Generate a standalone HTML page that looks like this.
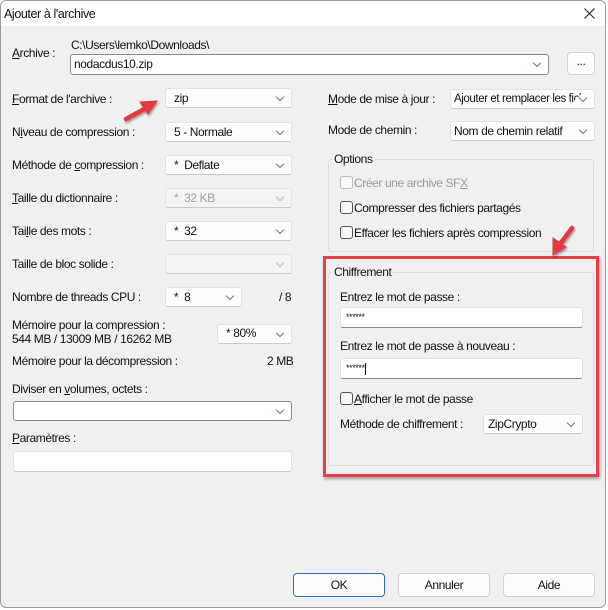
<!DOCTYPE html>
<html><head><meta charset="utf-8"><style>
*{box-sizing:border-box;margin:0;padding:0}
body{width:608px;height:610px;background:#fff;font-family:"Liberation Sans",sans-serif;font-size:12px;color:#111;position:relative;overflow:hidden;letter-spacing:-0.4px}
.win{position:absolute;left:0;top:0;width:606px;height:608px;border:1px solid #9a9a9a;border-radius:6px;background:#f0f0f0;overflow:hidden}
.title{position:absolute;left:0;top:0;width:606px;height:25px;background:#fff}
.a{position:absolute;white-space:nowrap;line-height:14px}
.cb{position:absolute;background:#fdfdfd;border:1px solid #e2e2e2;border-bottom-color:#c8c8c8;border-radius:3px;padding-left:8px;line-height:18px;white-space:nowrap;overflow:hidden}
.cb.dis{background:#f3f3f3;color:#a0a0a0}
.cb::after{content:"";position:absolute;right:8px;top:5px;width:5px;height:5px;border-right:1px solid #777;border-bottom:1px solid #777;transform:rotate(45deg);background:#fdfdfd;box-shadow:3px 3px 0 4px #fdfdfd}
.cb.dis::after{border-color:#bbb;background:#f3f3f3;box-shadow:none}
.ed{position:absolute;background:#fff;border:1px solid #e0e0e0;border-bottom:1px solid #888;border-radius:3px;padding-left:5px;line-height:18px}
.grp{position:absolute;border:1px solid #dcdcdc;border-radius:3px}
.lg{position:absolute;background:#f0f0f0;padding:0 2px;line-height:14px}
.ck{position:absolute;width:13px;height:13px;border:1px solid #555;border-radius:3px;background:#f8f8f8}
.btn{position:absolute;height:24px;background:#fdfdfd;border:1px solid #d0d0d0;border-radius:4px;text-align:center;line-height:22px}
u{text-decoration:underline}
</style></head><body>
<div class="win">
<div class="title"></div>
<div class="a" style="left:3px;top:6px;font-size:12.5px">Ajouter à l'archive</div>
<svg style="position:absolute;left:583px;top:7px" width="11" height="11"><path d="M0.5 0.5L10.5 10.5M10.5 0.5L0.5 10.5" stroke="#222" stroke-width="1.1"/></svg>

<div class="a" style="left:11px;top:45px"><u>A</u>rchive :</div>
<div class="a" style="left:70px;top:37px">C:\Users\lemko\Downloads\</div>
<div class="cb" style="left:69px;top:53px;width:479px;height:21px;border:1px solid #888;background:#fff;padding-left:3px">nodacdus10.zip</div>
<div class="btn" style="left:566px;top:51px;width:28px;height:23px;line-height:17px">...</div>

<div class="a" style="left:11px;top:91px"><u>F</u>ormat de l'archive :</div>
<div class="cb" style="left:164px;top:87px;width:127px;height:20px">zip</div>
<div class="a" style="left:11px;top:124px">N<u>i</u>veau de compression :</div>
<div class="cb" style="left:164px;top:121px;width:127px;height:20px">5 - Normale</div>
<div class="a" style="left:11px;top:157px">Méthode de <u>c</u>ompression :</div>
<div class="cb" style="left:164px;top:154px;width:127px;height:20px">* &nbsp;Deflate</div>
<div class="a" style="left:11px;top:190px"><u>T</u>aille du dictionnaire :</div>
<div class="cb dis" style="left:164px;top:187px;width:127px;height:20px">* &nbsp;32 KB</div>
<div class="a" style="left:11px;top:223px">Tai<u>l</u>le des mots :</div>
<div class="cb" style="left:164px;top:220px;width:127px;height:20px">* &nbsp;32</div>
<div class="a" style="left:11px;top:256px">Taille de bloc solide :</div>
<div class="cb dis" style="left:164px;top:253px;width:127px;height:20px"></div>
<div class="a" style="left:11px;top:289px">Nombre de threads CPU :</div>
<div class="cb" style="left:164px;top:286px;width:77px;height:20px">* &nbsp;8</div>
<div class="a" style="left:278px;top:289px">/ 8</div>
<div class="a" style="left:11px;top:317px">Mémoire pour la compression :</div>
<div class="a" style="left:11px;top:331px">544 MB / 13009 MB / 16262 MB</div>
<div class="cb" style="left:216px;top:323px;width:75px;height:20px;line-height:16px">* 80%</div>
<div class="a" style="left:11px;top:353px">Mémoire pour la décompression :</div>
<div class="a" style="left:266px;top:353px">2 MB</div>
<div class="a" style="left:11px;top:381px">Diviser en <u>v</u>olumes, octets :</div>
<div class="cb" style="left:12px;top:400px;width:279px;height:20px;border:1px solid #888;background:#fff"></div>
<div class="a" style="left:11px;top:430px"><u>P</u>aramètres :</div>
<div class="ed" style="left:12px;top:450px;width:279px;height:21px;border-bottom-color:#ccc"></div>

<div class="a" style="left:327px;top:91px"><u>M</u>ode de mise à jour :</div>
<div class="cb" style="left:449px;top:88px;width:145px;height:20px;padding-left:3px;font-size:11.5px">Ajouter et remplacer les fich</div>
<div class="a" style="left:327px;top:122px">Mode de chemin :</div>
<div class="cb" style="left:449px;top:120px;width:145px;height:20px;padding-left:3px">Nom de chemin relatif</div>

<div class="grp" style="left:327px;top:158px;width:266px;height:93px"></div>
<div class="lg" style="left:331px;top:151px">Options</div>
<div class="ck" style="left:339px;top:175px;border-color:#bbb"></div>
<div class="a" style="left:353px;top:175px;color:#9a9a9a">Créer une archive SF<u>X</u></div>
<div class="ck" style="left:339px;top:200px"></div>
<div class="a" style="left:353px;top:200px">Compresser des fichiers partagés</div>
<div class="ck" style="left:339px;top:225px"></div>
<div class="a" style="left:353px;top:225px">Effacer les fichiers après compression</div>

<div class="grp" style="left:327px;top:271px;width:266px;height:194px"></div>
<div class="lg" style="left:331px;top:264px">Chiffrement</div>
<div class="a" style="left:339px;top:289px">Entrez le mot de passe :</div>
<div class="ed" style="left:339px;top:306px;width:243px;height:21px;font-size:9px">******</div>
<div class="a" style="left:339px;top:338px">Entrez le mot de passe à nouveau :</div>
<div class="ed" style="left:339px;top:357px;width:243px;height:21px;font-size:9px">******<span style="display:inline-block;width:1px;height:12px;background:#000;vertical-align:middle"></span></div>
<div class="ck" style="left:339px;top:391px"></div>
<div class="a" style="left:353px;top:391px"><u>A</u>fficher le mot de passe</div>
<div class="a" style="left:339px;top:416px">Méthode de chiffrement :</div>
<div class="cb" style="left:482px;top:413px;width:100px;height:20px;padding-left:4px">ZipCrypto</div>

<div style="position:absolute;left:322px;top:255px;width:276px;height:221px;border:3px solid #e5404a;box-shadow:1px 2px 3px rgba(0,0,0,.35)"></div>

<div class="btn" style="left:292px;top:572px;width:92px;border:1px solid #2a6ec0">OK</div>
<div class="btn" style="left:397px;top:572px;width:92px">Annuler</div>
<div class="btn" style="left:502px;top:572px;width:92px">Aide</div>

<svg style="position:absolute;left:0;top:0" width="608" height="610">
<g fill="#e5383f" stroke="#e5383f" stroke-linecap="round" style="filter:drop-shadow(1px 2px 1px rgba(0,0,0,.35))">
<path d="M125 118L145 107" stroke-width="4.5" fill="none"/>
<path d="M156 100L139 101L147 113Z"/>
<path d="M571 227L559 243" stroke-width="4.5" fill="none"/>
<path d="M552 254L552 237L565 246Z"/>
</g></svg>
</div>
</body></html>
